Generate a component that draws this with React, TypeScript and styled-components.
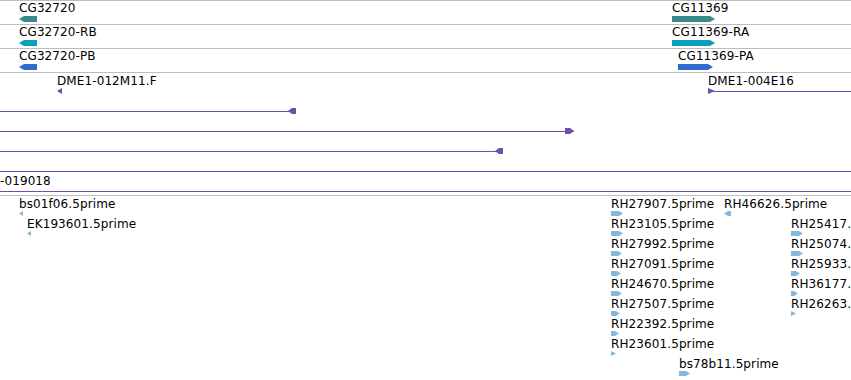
import React from "react";
import styled, { createGlobalStyle } from "styled-components";

const GlobalStyle = createGlobalStyle`
  html, body { margin: 0; padding: 0; background: #ffffff; }
  body { font-family: "DejaVu Sans", "Noto Sans", sans-serif; }
`;

const Panel = styled.div`
  width: 851px;
  height: 380px;
  overflow: hidden;
  background: #ffffff;
  display: flex;
  flex-direction: column;
`;

const GeneTrack = styled.section`
  display: flex;
  flex-direction: column;
`;

const GeneLane = styled.div`
  position: relative;
  height: 23px;
  border-top: 1px solid #bdbdbd;
`;

const BacTrack = styled.section`
  display: flex;
  flex-direction: column;
  border-top: 1px solid #bdbdbd;
  padding: 1px 0 1px;
`;

const EstTrack = styled.section`
  display: flex;
  flex-direction: column;
  border-top: 1px solid #bdbdbd;
  padding-top: 1px;
`;

const Lane = styled.div`
  position: relative;
  height: 20px;
`;

const Feature = styled.div`
  position: absolute;
  top: 0;
  display: flex;
  flex-direction: column;
  align-items: flex-start;
`;

const Label = styled.span`
  display: block;
  height: 14px;
  font-size: 12px;
  line-height: 14px;
  letter-spacing: 0.1px;
  color: #000000;
  white-space: nowrap;
`;

const GlyphBox = styled.svg<{ $gap: number }>`
  display: block;
  margin-top: ${(p) => p.$gap}px;
  overflow: visible;
`;

const TEAL = "#3a8a8c";
const CYAN = "#0aa0be";
const BLUE = "#2f6ccd";
const PURPLE = "#6c50ab";
const EST = "#84b9df";

type Dir = "L" | "R";

type Bar = { x: number; w: number; dir: Dir; label?: string };

function barPoints(w: number, h: number, dir: Dir, tip: number) {
  const m = h / 2;
  if (w <= tip + 1) {
    return dir === "L" ? `${w},0 0,${m} ${w},${h}` : `0,0 ${w},${m} 0,${h}`;
  }
  return dir === "L"
    ? `0,${m} ${tip},0 ${w},0 ${w},${h} ${tip},${h}`
    : `0,0 ${w - tip},0 ${w},${m} ${w - tip},${h} 0,${h}`;
}

function BarGlyph({ w, h, dir, color, gap, tip }: { w: number; h: number; dir: Dir; color: string; gap: number; tip: number }) {
  return (
    <GlyphBox $gap={gap} width={w} height={h} viewBox={`0 0 ${w} ${h}`}>
      <polygon points={barPoints(w, h, dir, tip)} fill={color} />
    </GlyphBox>
  );
}

type Seg = {
  x: number;
  w: number;
  label?: string;
  head: "endL" | "endR" | "startR" | "none" | "tinyL";
};

function SegGlyph({ w, head }: { w: number; head: Seg["head"] }) {
  const h = 6;
  let shape: React.ReactNode = null;
  if (head === "endL") shape = <polygon points={`${w - 8},3 ${w - 4},0 ${w},0 ${w},6 ${w - 4},6`} fill={PURPLE} />;
  if (head === "endR") shape = <polygon points={`${w - 9},0 ${w - 4},0 ${w},3 ${w - 4},6 ${w - 9},6`} fill={PURPLE} />;
  if (head === "startR") shape = <polygon points="0,0 7,3 0,6" fill={PURPLE} />;
  if (head === "tinyL") shape = <polygon points={`${w},0 0,3 ${w},6`} fill={PURPLE} />;
  return (
    <GlyphBox $gap={0} width={w} height={h} viewBox={`0 0 ${w} ${h}`}>
      {head !== "tinyL" && <line x1={0} y1={3.5} x2={w} y2={3.5} stroke={PURPLE} strokeWidth={1} />}
      {shape}
    </GlyphBox>
  );
}

const geneLanes: { color: string; bars: Bar[] }[] = [
  {
    color: TEAL,
    bars: [
      { x: 19, w: 18, dir: "L", label: "CG32720" },
      { x: 672, w: 43, dir: "R", label: "CG11369" },
    ],
  },
  {
    color: CYAN,
    bars: [
      { x: 19, w: 18, dir: "L", label: "CG32720-RB" },
      { x: 672, w: 43, dir: "R", label: "CG11369-RA" },
    ],
  },
  {
    color: BLUE,
    bars: [
      { x: 19, w: 18, dir: "L", label: "CG32720-PB" },
      { x: 678, w: 35, dir: "R", label: "CG11369-PA" },
    ],
  },
];

const bacLanes: Seg[][] = [
  [
    { x: 57, w: 5, head: "tinyL", label: "DME1-012M11.F" },
    { x: 708, w: 143, head: "startR", label: "DME1-004E16" },
  ],
  [{ x: 0, w: 296, head: "endL" }],
  [{ x: 0, w: 574, head: "endR" }],
  [{ x: 0, w: 503, head: "endL" }],
  [{ x: 0, w: 851, head: "none" }],
  [{ x: 0, w: 851, head: "none", label: "-019018" }],
];

const estLanes: Bar[][] = [
  [
    { x: 19, w: 4, dir: "L", label: "bs01f06.5prime" },
    { x: 611, w: 12, dir: "R", label: "RH27907.5prime" },
    { x: 724, w: 7, dir: "L", label: "RH46626.5prime" },
  ],
  [
    { x: 27, w: 4, dir: "L", label: "EK193601.5prime" },
    { x: 611, w: 12, dir: "R", label: "RH23105.5prime" },
    { x: 791, w: 12, dir: "R", label: "RH25417." },
  ],
  [
    { x: 611, w: 11, dir: "R", label: "RH27992.5prime" },
    { x: 791, w: 12, dir: "R", label: "RH25074." },
  ],
  [
    { x: 611, w: 10, dir: "R", label: "RH27091.5prime" },
    { x: 791, w: 9, dir: "R", label: "RH25933." },
  ],
  [
    { x: 611, w: 11, dir: "R", label: "RH24670.5prime" },
    { x: 791, w: 7, dir: "R", label: "RH36177." },
  ],
  [
    { x: 611, w: 9, dir: "R", label: "RH27507.5prime" },
    { x: 791, w: 5, dir: "R", label: "RH26263." },
  ],
  [{ x: 611, w: 8, dir: "R", label: "RH22392.5prime" }],
  [{ x: 611, w: 5, dir: "R", label: "RH23601.5prime" }],
  [{ x: 679, w: 11, dir: "R", label: "bs78b11.5prime" }],
];

export default function App() {
  return (
    <>
      <GlobalStyle />
      <Panel>
        <GeneTrack>
          {geneLanes.map((lane, i) => (
            <GeneLane key={i}>
              {lane.bars.map((b) => (
                <Feature key={b.label} style={{ left: b.x }}>
                  <Label>{b.label}</Label>
                  <BarGlyph w={b.w} h={6} dir={b.dir} color={lane.color} gap={1} tip={5} />
                </Feature>
              ))}
            </GeneLane>
          ))}
        </GeneTrack>
        <BacTrack>
          {bacLanes.map((lane, i) => (
            <Lane key={i}>
              {lane.map((s, j) => (
                <Feature key={j} style={{ left: s.x }}>
                  <Label>{s.label ?? ""}</Label>
                  <SegGlyph w={s.w} head={s.head} />
                </Feature>
              ))}
            </Lane>
          ))}
        </BacTrack>
        <EstTrack>
          {estLanes.map((lane, i) => (
            <Lane key={i}>
              {lane.map((b) => (
                <Feature key={b.label} style={{ left: b.x }}>
                  <Label>{b.label}</Label>
                  <BarGlyph w={b.w} h={5} dir={b.dir} color={EST} gap={0} tip={4} />
                </Feature>
              ))}
            </Lane>
          ))}
        </EstTrack>
      </Panel>
    </>
  );
}
